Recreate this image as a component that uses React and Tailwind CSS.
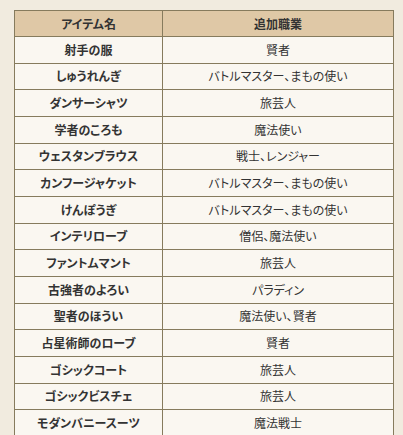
import React from 'react';

const rows = [
  ['射手の服', '賢者'],
  ['しゅうれんぎ', 'バトルマスター、まもの使い'],
  ['ダンサーシャツ', '旅芸人'],
  ['学者のころも', '魔法使い'],
  ['ウェスタンブラウス', '戦士、レンジャー'],
  ['カンフージャケット', 'バトルマスター、まもの使い'],
  ['けんぽうぎ', 'バトルマスター、まもの使い'],
  ['インテリローブ', '僧侶、魔法使い'],
  ['ファントムマント', '旅芸人'],
  ['古強者のよろい', 'パラディン'],
  ['聖者のほうい', '魔法使い、賢者'],
  ['占星術師のローブ', '賢者'],
  ['ゴシックコート', '旅芸人'],
  ['ゴシックビスチェ', '旅芸人'],
  ['モダンバニースーツ', '魔法戦士'],
];

const App = () => {
  return (
    <div
      className="w-[403px] h-[435px] overflow-hidden bg-[#f1ebdf] pt-[10px] pl-[14px]"
      style={{ fontFamily: '"Noto Sans CJK JP", "Noto Sans", sans-serif' }}
    >
      {/* palt narrows the kana, closer to the proportional gothic of the original */}
      <table className="border-collapse w-[380px] text-[12px] text-[#333] leading-none [font-feature-settings:'palt']">
        <thead>
          <tr className="bg-[#dfc8a6]">
            <th className="border border-[#867b5d] h-[26px] w-[148px] font-bold text-center">アイテム名</th>
            <th className="border border-[#867b5d] h-[26px] font-bold text-center">追加職業</th>
          </tr>
        </thead>
        <tbody>
          {rows.map(([item, job]) => (
            <tr key={item} className="bg-[#faf7f1]">
              <td className="border border-[#867b5d] h-[26.67px] font-bold text-center">{item}</td>
              <td className="border border-[#867b5d] h-[26.67px] text-center">{job}</td>
            </tr>
          ))}
        </tbody>
      </table>
    </div>
  );
};

export default App;
